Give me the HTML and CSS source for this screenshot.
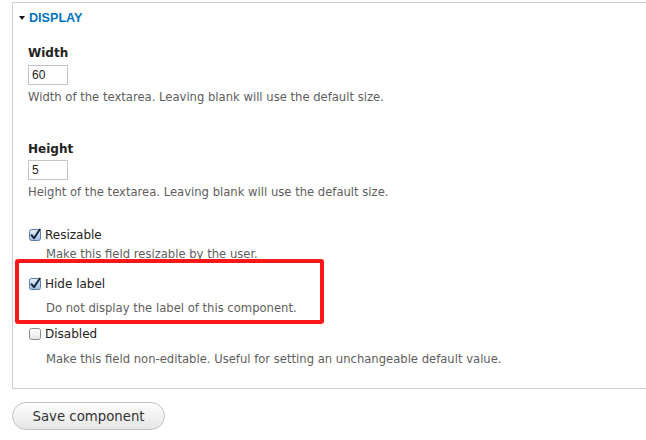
FILE: index.html
```html
<!DOCTYPE html>
<html>
<head>
<meta charset="utf-8">
<link rel="stylesheet" href="styles.css">
</head>
<body>
<div class="page">
  <div class="fieldset">
    <div class="legend">
      <svg class="arrow" width="6" height="4" viewBox="0 0 6 4"><path d="M0 0H6L3 4Z" fill="#111"/></svg>
      <span>DISPLAY</span>
    </div>
    <div class="item item-width">
      <div class="label">Width</div>
      <div class="input">60</div>
      <div class="desc">Width of the textarea. Leaving blank will use the default size.</div>
    </div>
    <div class="item item-height">
      <div class="label">Height</div>
      <div class="input">5</div>
      <div class="desc">Height of the textarea. Leaving blank will use the default size.</div>
    </div>
    <div class="check check-resizable">
      <div class="row">
        <svg class="cb" width="14" height="14" viewBox="0 0 14 14">
          <defs><linearGradient id="g1" x1="0" y1="0" x2="0" y2="1"><stop offset="0" stop-color="#e6eef8"/><stop offset="1" stop-color="#9fc0e6"/></linearGradient></defs>
          <rect x="1.5" y="1.5" width="11" height="11" rx="2" fill="url(#g1)" stroke="#5b7ea8"/>
          <path d="M3.5 7.2L6 10.2L11.8 1.5" fill="none" stroke="#16233a" stroke-width="2" stroke-linecap="round" stroke-linejoin="round"/>
        </svg>
        <span>Resizable</span>
      </div>
      <div class="desc cdesc">Make this field resizable by the user.</div>
    </div>
    <div class="check check-hide">
      <div class="row">
        <svg class="cb" width="14" height="14" viewBox="0 0 14 14">
          <defs><linearGradient id="g2" x1="0" y1="0" x2="0" y2="1"><stop offset="0" stop-color="#e6eef8"/><stop offset="1" stop-color="#9fc0e6"/></linearGradient></defs>
          <rect x="1.5" y="1.5" width="11" height="11" rx="2" fill="url(#g2)" stroke="#5b7ea8"/>
          <path d="M3.5 7.2L6 10.2L11.8 1.5" fill="none" stroke="#16233a" stroke-width="2" stroke-linecap="round" stroke-linejoin="round"/>
        </svg>
        <span>Hide label</span>
      </div>
      <div class="desc cdesc">Do not display the label of this component.</div>
    </div>
    <div class="check check-disabled">
      <div class="row">
        <svg class="cb" width="14" height="14" viewBox="0 0 14 14">
          <defs><linearGradient id="g3" x1="0" y1="0" x2="0" y2="1"><stop offset="0" stop-color="#ffffff"/><stop offset="1" stop-color="#e4e4e4"/></linearGradient></defs>
          <rect x="1.5" y="1.5" width="11" height="11" rx="2" fill="url(#g3)" stroke="#8a8a8a"/>
        </svg>
        <span>Disabled</span>
      </div>
      <div class="desc cdesc">Make this field non-editable. Useful for setting an unchangeable default value.</div>
    </div>
    <div class="highlight"></div>
  </div>
  <div class="actions">
    <button class="btn">Save component</button>
  </div>
</div>
</body>
</html>
```
FILE: styles.css
```css
html, body {
  margin: 0;
  padding: 0;
  background: #fff;
}
body {
  font-family: "DejaVu Sans", Verdana, sans-serif;
  color: #333;
}
.page {
  padding: 2px 0 0 12px;
}
.fieldset {
  position: relative;
  border: 1px solid #cfcfcf;
  border-right: 0;
  padding: 7px 0 21px 15px;
}
.legend {
  display: flex;
  align-items: center;
  gap: 4px;
  height: 16px;
  margin-left: -9px;
  font-family: "Liberation Sans", Arial, sans-serif;
  font-weight: bold;
  font-size: 12.6px;
  color: #0074bd;
}
.arrow { display: block; }
.item-width { margin-top: 18px; }
.item-height { margin-top: 35px; }
.item-height .input { margin-top: 2px; }
.label {
  font-weight: bold;
  font-size: 12px;
  line-height: 18px;
  color: #222;
}
.input {
  box-sizing: border-box;
  width: 40px;
  height: 20px;
  margin-top: 3px;
  border: 1px solid #c4c4c4;
  font-family: "Liberation Sans", Arial, sans-serif;
  font-size: 12px;
  line-height: 18px;
  padding-left: 3px;
  color: #222;
}
.desc {
  font-size: 11.6px;
  line-height: 16px;
  color: #5e5e5e;
  margin-top: 4px;
  white-space: nowrap;
}
.row {
  display: flex;
  align-items: center;
  gap: 3px;
  height: 18px;
  font-size: 12px;
  color: #222;
}
.cb { display: block; }
.cdesc { margin-left: 18px; }
.check-resizable { margin-top: 26px; }
.check-resizable .cdesc { margin-top: 2px; }
.check-hide { margin-top: 13px; }
.check-hide .cdesc { margin-top: 7px; }
.check-disabled { margin-top: 9px; }
.check-disabled .cdesc { margin-top: 8px; }
.highlight {
  position: absolute;
  left: 2px;
  top: 256px;
  width: 301px;
  height: 57px;
  border: 4px solid #fc1818;
  border-radius: 3px;
}
.actions {
  margin-top: 13px;
}
.btn {
  display: block;
  box-sizing: border-box;
  width: 153px;
  height: 28px;
  border: 1px solid #c2c2c2;
  border-radius: 14px;
  background: linear-gradient(#fdfdfd, #e6e6e6);
  font-family: "DejaVu Sans", Verdana, sans-serif;
  font-size: 13.3px;
  color: #333;
  padding: 0;
}
```
